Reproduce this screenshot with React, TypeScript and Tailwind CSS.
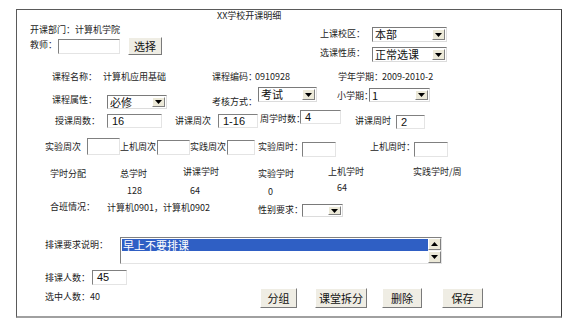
import type { ReactNode } from "react";

const cjk = "font-['Noto_Sans_CJK_SC','Noto_Sans',sans-serif]";
const field = "font-['Liberation_Sans','Noto_Sans_CJK_SC',sans-serif]";

function T({ c = "", children }: { c?: string; children: ReactNode }) {
  return (
    <div className={`shrink-0 whitespace-nowrap text-[9px] leading-[12px] text-[#222] ${c}`}>
      {children}
    </div>
  );
}

function Arrow({ up = false }: { up?: boolean }) {
  return (
    <svg width="7" height="4" viewBox="0 0 7 4">
      <polygon points={up ? "0,4 7,4 3.5,0" : "0,0 7,0 3.5,4"} fill="#000" />
    </svg>
  );
}

function Input({ c = "", value = "" }: { c?: string; value?: string }) {
  return (
    <div
      className={`shrink-0 flex items-center bg-white border-t border-l border-t-[#808080] border-l-[#808080] border-r border-b border-r-[#e4e4e4] border-b-[#e4e4e4] pl-[4px] text-[11px] leading-[11px] text-[#111] ${field} ${c}`}
    >
      {value}
    </div>
  );
}

function Select({ c = "", value = "" }: { c?: string; value?: string }) {
  return (
    <div
      className={`shrink-0 flex items-stretch bg-white border-t border-l border-t-[#7a7a7a] border-l-[#7a7a7a] border-r border-b border-r-[#dcdcdc] border-b-[#dcdcdc] text-[11px] text-[#111] ${cjk} ${c}`}
    >
      <div className="flex-1 min-w-0 flex items-center pl-[2px] whitespace-nowrap leading-[11px]">{value}</div>
      <div className="w-[13px] shrink-0 my-[1px] mr-[1px] flex items-center justify-center bg-[#ece9d8] border-t border-l border-t-white border-l-white border-r border-b border-r-[#808080] border-b-[#808080]">
        <Arrow />
      </div>
    </div>
  );
}

function Button({ c = "", children }: { c?: string; children: ReactNode }) {
  return (
    <div
      className={`shrink-0 flex items-center justify-center bg-[#efede4] border-t border-l border-t-white border-l-white border-r border-b border-r-[#7a7a7a] border-b-[#7a7a7a] text-[11px] leading-[12px] text-[#111] ${cjk} ${c}`}
    >
      {children}
    </div>
  );
}

export default function App() {
  return (
    <div className={`w-[579px] h-[323px] bg-white pt-[9px] pl-[16px] ${cjk}`}>
      <div className="w-[546px] h-[309px] border-t border-l border-r border-t-[#5a5a5a] border-l-[#5a5a5a] border-r-[#3c3c3c] border-b-2 border-b-[#a0a0a0]">
        {/* title */}
        <div className="flex h-[13px]">
          <T c="ml-[200px]">XX学校开课明细</T>
        </div>

        {/* dept / campus */}
        <div className="flex h-[14px]">
          <T c="ml-[13px] w-[290px] mt-[1px]">开课部门：计算机学院</T>
          <T c="w-[52px] mt-[5px]">上课校区：</T>
          <Select c="w-[75px] h-[15px] mt-[4px]" value="本部" />
        </div>

        {/* teacher / type */}
        <div className="flex h-[25px]">
          <T c="ml-[13px] w-[28px] mt-[2px]">教师：</T>
          <Input c="w-[62px] h-[15px] mt-[2px]" />
          <Button c="ml-[8px] w-[34px] h-[18px]">选择</Button>
          <T c="ml-[158px] w-[52px] mt-[10px]">选课性质：</T>
          <Select c="w-[75px] h-[15px] mt-[10px]" value="正常选课" />
        </div>

        {/* course info */}
        <div className="flex h-[25px] pt-[9px]">
          <T c="ml-[35px] w-[51px]">课程名称：</T>
          <T c="w-[109px]">计算机应用基础</T>
          <T c="w-[43px]">课程编码：</T>
          <T c="w-[83px]">0910928</T>
          <T c="w-[44px]">学年学期：</T>
          <T>2009-2010-2</T>
        </div>

        {/* attributes */}
        <div className="flex h-[23px]">
          <T c="ml-[35px] w-[55px] mt-[7px]">课程属性：</T>
          <Select c="w-[60px] h-[14px] mt-[8px]" value="必修" />
          <T c="ml-[45px] w-[46px] mt-[9px]">考核方式：</T>
          <Select c="w-[59px] h-[15px] mt-0" value="考试" />
          <T c="ml-[20px] w-[32px] mt-[3px]">小学期：</T>
          <Select c="w-[61px] h-[14px] mt-[1px]" value="1" />
        </div>

        {/* weeks */}
        <div className="flex h-[20px]">
          <T c="ml-[38px] w-[52px] mt-[5px]">授课周数：</T>
          <Input c="w-[55px] h-[14px] mt-[4px]" value="16" />
          <T c="ml-[13px] w-[43px] mt-[5px]">讲课周次</T>
          <Input c="w-[40px] h-[14px] mt-[4px]" value="1-16" />
          <T c="ml-[2px] w-[40px] mt-[3px]">周学时数：</T>
          <Input c="w-[41px] h-[14px] mt-0" value="4" />
          <T c="ml-[14px] w-[41px] mt-[5px]">讲课周时</T>
          <Input c="w-[29px] h-[14px] mt-[5px]" value="2" />
        </div>

        {/* lab weeks */}
        <div className="flex h-[27px]">
          <T c="ml-[28px] w-[42px] mt-[11px]">实验周次</T>
          <Input c="w-[33px] h-[17px] mt-[8px]" />
          <T c="w-[37px] mt-[11px]">上机周次</T>
          <Input c="w-[33px] h-[15px] mt-[10px]" />
          <T c="w-[37px] mt-[11px]">实践周次</T>
          <Input c="w-[28px] h-[15px] mt-[10px]" />
          <T c="ml-[3px] w-[44px] mt-[11px]">实验周时：</T>
          <Input c="w-[34px] h-[15px] mt-[12px]" />
          <T c="ml-[34px] w-[44px] mt-[11px]">上机周时：</T>
          <Input c="w-[34px] h-[15px] mt-[12px]" />
        </div>

        {/* hours headers */}
        <div className="flex h-[24px]">
          <T c="ml-[33px] w-[70px] mt-[11px]">学时分配</T>
          <T c="w-[63px] mt-[11px]">总学时</T>
          <T c="w-[75px] mt-[9px]">讲课学时</T>
          <T c="w-[70px] mt-[11px]">实验学时</T>
          <T c="w-[85px] mt-[9px]">上机学时</T>
          <T c="mt-[9px]">实践学时/周</T>
        </div>

        {/* hours values */}
        <div className="flex h-[19px]">
          <T c="ml-[110px] w-[63px] mt-[4px]">128</T>
          <T c="w-[78px] mt-[4px]">64</T>
          <T c="w-[69px] mt-[5px]">0</T>
          <T c="mt-[1px]">64</T>
        </div>

        {/* classes */}
        <div className="flex h-[22px]">
          <T c="ml-[33px] w-[57px] mt-[1px]">合班情况：</T>
          <T c="w-[151px] mt-[2px]">计算机0901，计算机0902</T>
          <T c="w-[44px] mt-[4px]">性别要求：</T>
          <Select c="w-[41px] h-[13px] mt-[4px]" />
        </div>

        {/* requirement */}
        <div className="flex h-[43px]">
          <T c="ml-[28px] w-[75px] mt-[17px]">排课要求说明：</T>
          <div className="shrink-0 w-[322px] h-[27px] mt-[15px] flex bg-white border-t border-l border-t-[#808080] border-l-[#808080] border-r border-b border-r-[#e4e4e4] border-b-[#e4e4e4]">
            <div className="flex-1 pt-[1px] pl-[1px]">
              <div className="h-[12px] bg-[#2f5fc4] text-white text-[11px] leading-[12px] pl-[1px] whitespace-nowrap">
                早上不要排课
              </div>
            </div>
            <div className="w-[13px] flex flex-col justify-between bg-[#f4f3ee]">
              <div className="h-[12px] flex items-center justify-center bg-[#ece9d8] border-t border-l border-t-white border-l-white border-r border-b border-r-[#808080] border-b-[#808080]">
                <Arrow up />
              </div>
              <div className="h-[12px] flex items-center justify-center bg-[#ece9d8] border-t border-l border-t-white border-l-white border-r border-b border-r-[#808080] border-b-[#808080]">
                <Arrow />
              </div>
            </div>
          </div>
        </div>

        {/* count */}
        <div className="flex h-[22px]">
          <T c="ml-[28px] w-[47px] mt-[7px]">排课人数：</T>
          <Input c="w-[35px] h-[15px] mt-[5px]" value="45" />
        </div>

        {/* selected + actions */}
        <div className="flex h-[22px]">
          <T c="ml-[28px] w-[215px] mt-[4px]">选中人数：40</T>
          <Button c="w-[37px] h-[20px] mt-[1px]">分组</Button>
          <Button c="ml-[18px] w-[52px] h-[20px] mt-[1px]">课堂拆分</Button>
          <Button c="ml-[15px] w-[40px] h-[20px] mt-[1px]">删除</Button>
          <Button c="ml-[20px] w-[41px] h-[20px] mt-[1px]">保存</Button>
        </div>
      </div>
    </div>
  );
}
